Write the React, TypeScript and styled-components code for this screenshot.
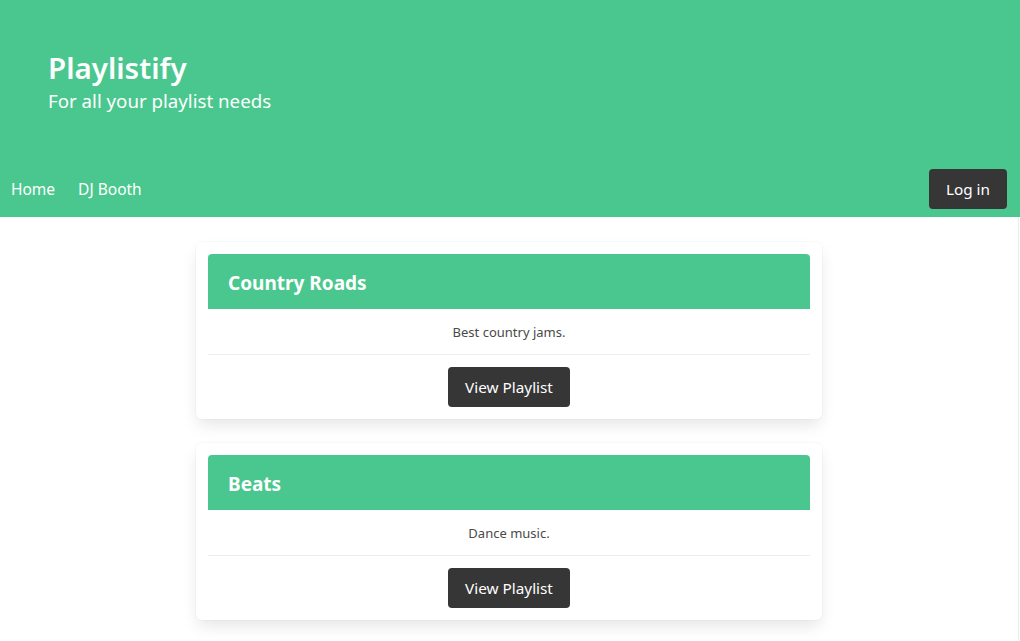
import React from "react";
import styled, { createGlobalStyle } from "styled-components";

const GlobalStyle = createGlobalStyle`
  html, body {
    margin: 0;
    padding: 0;
    background: #ffffff;
  }
  body {
    font-family: "Noto Sans", "Open Sans", sans-serif;
    color: #4a4a4a;
    font-size: 16px;
  }
  * { box-sizing: border-box; }
`;

const GREEN = "#4ac78e";

const Hero = styled.header`
  background: ${GREEN};
  display: flex;
  flex-direction: column;
  height: 217px;
`;

const HeroBody = styled.div`
  flex: 1;
  padding: 48px 48px 0;
  display: flex;
  flex-direction: column;
`;

const Title = styled.h1`
  margin: 0;
  font-size: 29.5px;
  font-weight: 600;
  line-height: 40px;
  color: #ffffff;
`;

const Subtitle = styled.h2`
  margin: 0;
  font-size: 18.7px;
  font-weight: 400;
  line-height: 26px;
  color: #ffffff;
`;

const Nav = styled.nav`
  height: 56px;
  display: flex;
  align-items: center;
  justify-content: space-between;
  padding: 0 13px 0 0;
`;

const NavLinks = styled.div`
  display: flex;
  align-items: center;
`;

const NavLink = styled.a`
  color: #ffffff;
  font-size: 15.5px;
  padding: 0 12px 0 11px;
  text-decoration: none;
  line-height: 24px;
`;

const DarkButton = styled.button`
  background: #363636;
  color: #ffffff;
  border: none;
  border-radius: 4px;
  height: 40px;
  padding: 0 17px;
  font-family: inherit;
  font-size: 15.3px;
  cursor: pointer;
`;

const Main = styled.main`
  margin-right: 1px;
  border-right: 1px solid #ececec;
  display: flex;
  flex-direction: column;
  align-items: center;
  gap: 24px;
  padding: 25px 0 24px;
`;

const Card = styled.section`
  width: 626px;
  background: #ffffff;
  border-radius: 6px;
  box-shadow: 0 8px 16px -2px rgba(10, 10, 10, 0.1), 0 0 0 1px rgba(10, 10, 10, 0.02);
  padding: 12px;
  display: flex;
  flex-direction: column;
`;

const CardHeader = styled.div`
  background: ${GREEN};
  border-radius: 4px 4px 0 0;
  height: 55px;
  display: flex;
  align-items: center;
  padding: 3px 20px 0;
`;

const CardTitle = styled.h3`
  margin: 0;
  color: #ffffff;
  font-size: 19px;
  font-weight: 700;
`;

const CardBody = styled.p`
  margin: 0;
  height: 46px;
  display: flex;
  align-items: center;
  justify-content: center;
  font-size: 13px;
  border-bottom: 1px solid #ededed;
`;

const CardFooter = styled.div`
  display: flex;
  justify-content: center;
  padding-top: 12px;
`;

const playlists = [
  { name: "Country Roads", description: "Best country jams." },
  { name: "Beats", description: "Dance music." },
];

export default function App() {
  return (
    <>
      <GlobalStyle />
      <Hero>
        <HeroBody>
          <Title>Playlistify</Title>
          <Subtitle>For all your playlist needs</Subtitle>
        </HeroBody>
        <Nav>
          <NavLinks>
            <NavLink href="#">Home</NavLink>
            <NavLink href="#">DJ Booth</NavLink>
          </NavLinks>
          <DarkButton>Log in</DarkButton>
        </Nav>
      </Hero>
      <Main>
        {playlists.map((p) => (
          <Card key={p.name}>
            <CardHeader>
              <CardTitle>{p.name}</CardTitle>
            </CardHeader>
            <CardBody>{p.description}</CardBody>
            <CardFooter>
              <DarkButton>View Playlist</DarkButton>
            </CardFooter>
          </Card>
        ))}
      </Main>
    </>
  );
}
